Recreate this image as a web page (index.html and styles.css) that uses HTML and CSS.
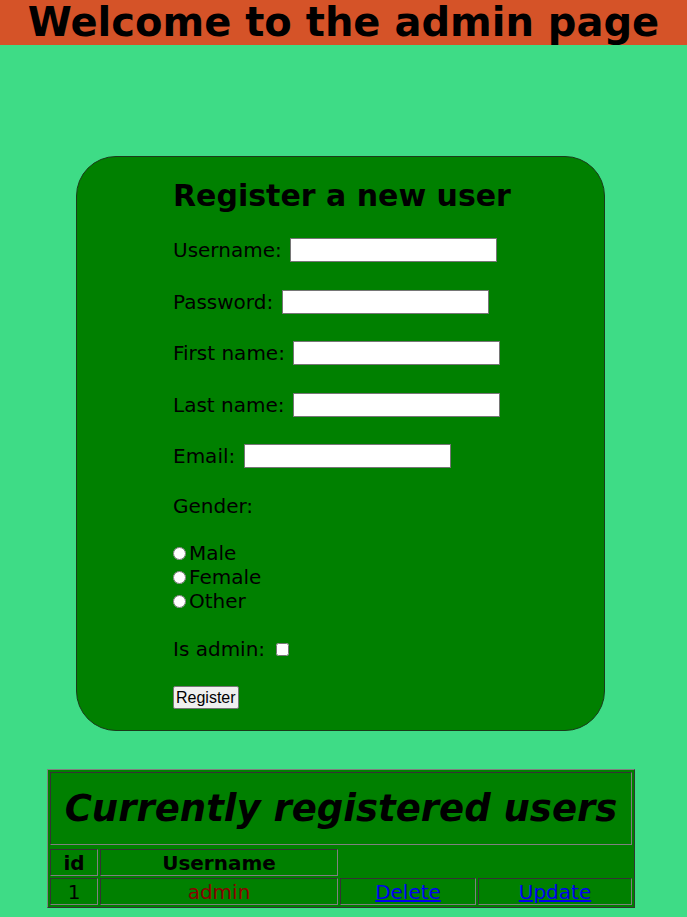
FILE: index.html
```html
<!DOCTYPE html>
<html>
<head>
<meta charset="utf-8">
<title>Admin</title>
<link rel="stylesheet" href="styles.css">
</head>
<body>
<h1 class="banner">Welcome to the admin page</h1>
<div class="box">
  <h2 class="box-title">Register a new user</h2>
  <form class="reg-form">
    <p class="field">Username:&nbsp;<input type="text" class="txt"></p>
    <p class="field">Password:&nbsp;<input type="password" class="txt"></p>
    <p class="field">First name:&nbsp;<input type="text" class="txt"></p>
    <p class="field">Last name:&nbsp;<input type="text" class="txt"></p>
    <p class="field">Email:&nbsp;<input type="text" class="txt"></p>
    <p class="field gender">Gender:</p>
    <div class="radios">
      <label class="radio"><input type="radio" name="g">Male</label>
      <label class="radio"><input type="radio" name="g">Female</label>
      <label class="radio"><input type="radio" name="g">Other</label>
    </div>
    <p class="field admin">Is admin:&nbsp;<input type="checkbox" class="chk"></p>
    <button type="button" class="btn">Register</button>
  </form>
</div>
<table class="users">
  <tr><th colspan="4" class="caption">Currently registered users</th></tr>
  <tr class="spacer"><td colspan="4"></td></tr>
  <tr><th class="c-id">id</th><th class="c-name">Username</th></tr>
  <tr><td>1</td><td class="uname">admin</td><td class="c-del"><a href="#">Delete</a></td><td class="c-upd"><a href="#">Update</a></td></tr>
</table>
</body>
</html>
```
FILE: styles.css
```css
html, body {
  margin: 0;
  padding: 0;
}
body {
  background: #3edc86;
  font-family: "DejaVu Sans", Verdana, sans-serif;
  color: #000;
  height: 917px;
  overflow: hidden;
}
.banner {
  margin: 0;
  height: 45px;
  background: #d55328;
  font-size: 40px;
  line-height: 45px;
  font-weight: bold;
  text-align: center;
  white-space: nowrap;
}
.box {
  margin: 111px 0 0 76px;
  width: 431px;
  padding: 21px 0 21px 96px;
  background: #008000;
  border: 1px solid #1a3a1a;
  border-radius: 40px;
}
.box-title {
  margin: 0;
  font-size: 30px;
  font-weight: bold;
}
.reg-form {
  display: flex;
  flex-direction: column;
  align-items: flex-start;
  font-size: 20px;
  margin-top: 25px;
}
.field {
  margin: 0;
  height: 24px;
  display: flex;
  align-items: center;
}
.field + .field {
  margin-top: 27.5px;
}
.field.gender {
  margin-top: 26px;
}
.txt {
  width: 207px;
  height: 24px;
  box-sizing: border-box;
  margin: 0 0 0 2px;
  border: 1px solid #767676;
  background: #fff;
}
.radios {
  margin-top: 23px;
  display: flex;
  flex-direction: column;
}
.radio {
  height: 24px;
  display: flex;
  align-items: center;
}
.radio input {
  margin: 0 3px 0 0;
  width: 13px;
  height: 13px;
}
.field.admin {
  margin-top: 24px;
}
.chk {
  margin: 0 0 0 5px;
  width: 13px;
  height: 13px;
}
.btn {
  margin-top: 25px;
  height: 23px;
  padding: 0 2px;
  font-family: "Liberation Sans", Arial, sans-serif;
  font-size: 16px;
  background: #efefef;
  border: 1px solid #767676;
  border-radius: 2px;
  color: #000;
}
.users {
  margin: 38px 0 0 47px;
  background: #008000;
  border-collapse: separate;
  border-spacing: 2px;
  border: 1px solid;
  border-color: #808080 #333 #333 #808080;
}
.users th, .users td {
  border: 1px solid;
  border-color: #333 #808080 #808080 #333;
  padding: 0;
  text-align: center;
  font-size: 20px;
  height: 25px;
}
.users th {
  font-weight: bold;
}
.users .caption {
  height: 71px;
  font-size: 37px;
  font-style: italic;
  white-space: nowrap;
}
.users .spacer td {
  height: 0;
  border: 0;
  padding: 0;
}
.c-id { width: 46px; }
.c-name { width: 236px; }
.c-del { width: 134px; }
.c-upd { width: 152px; }
.uname { color: #8b0000; }
.users a { color: #0000ee; text-decoration: underline; }
```
